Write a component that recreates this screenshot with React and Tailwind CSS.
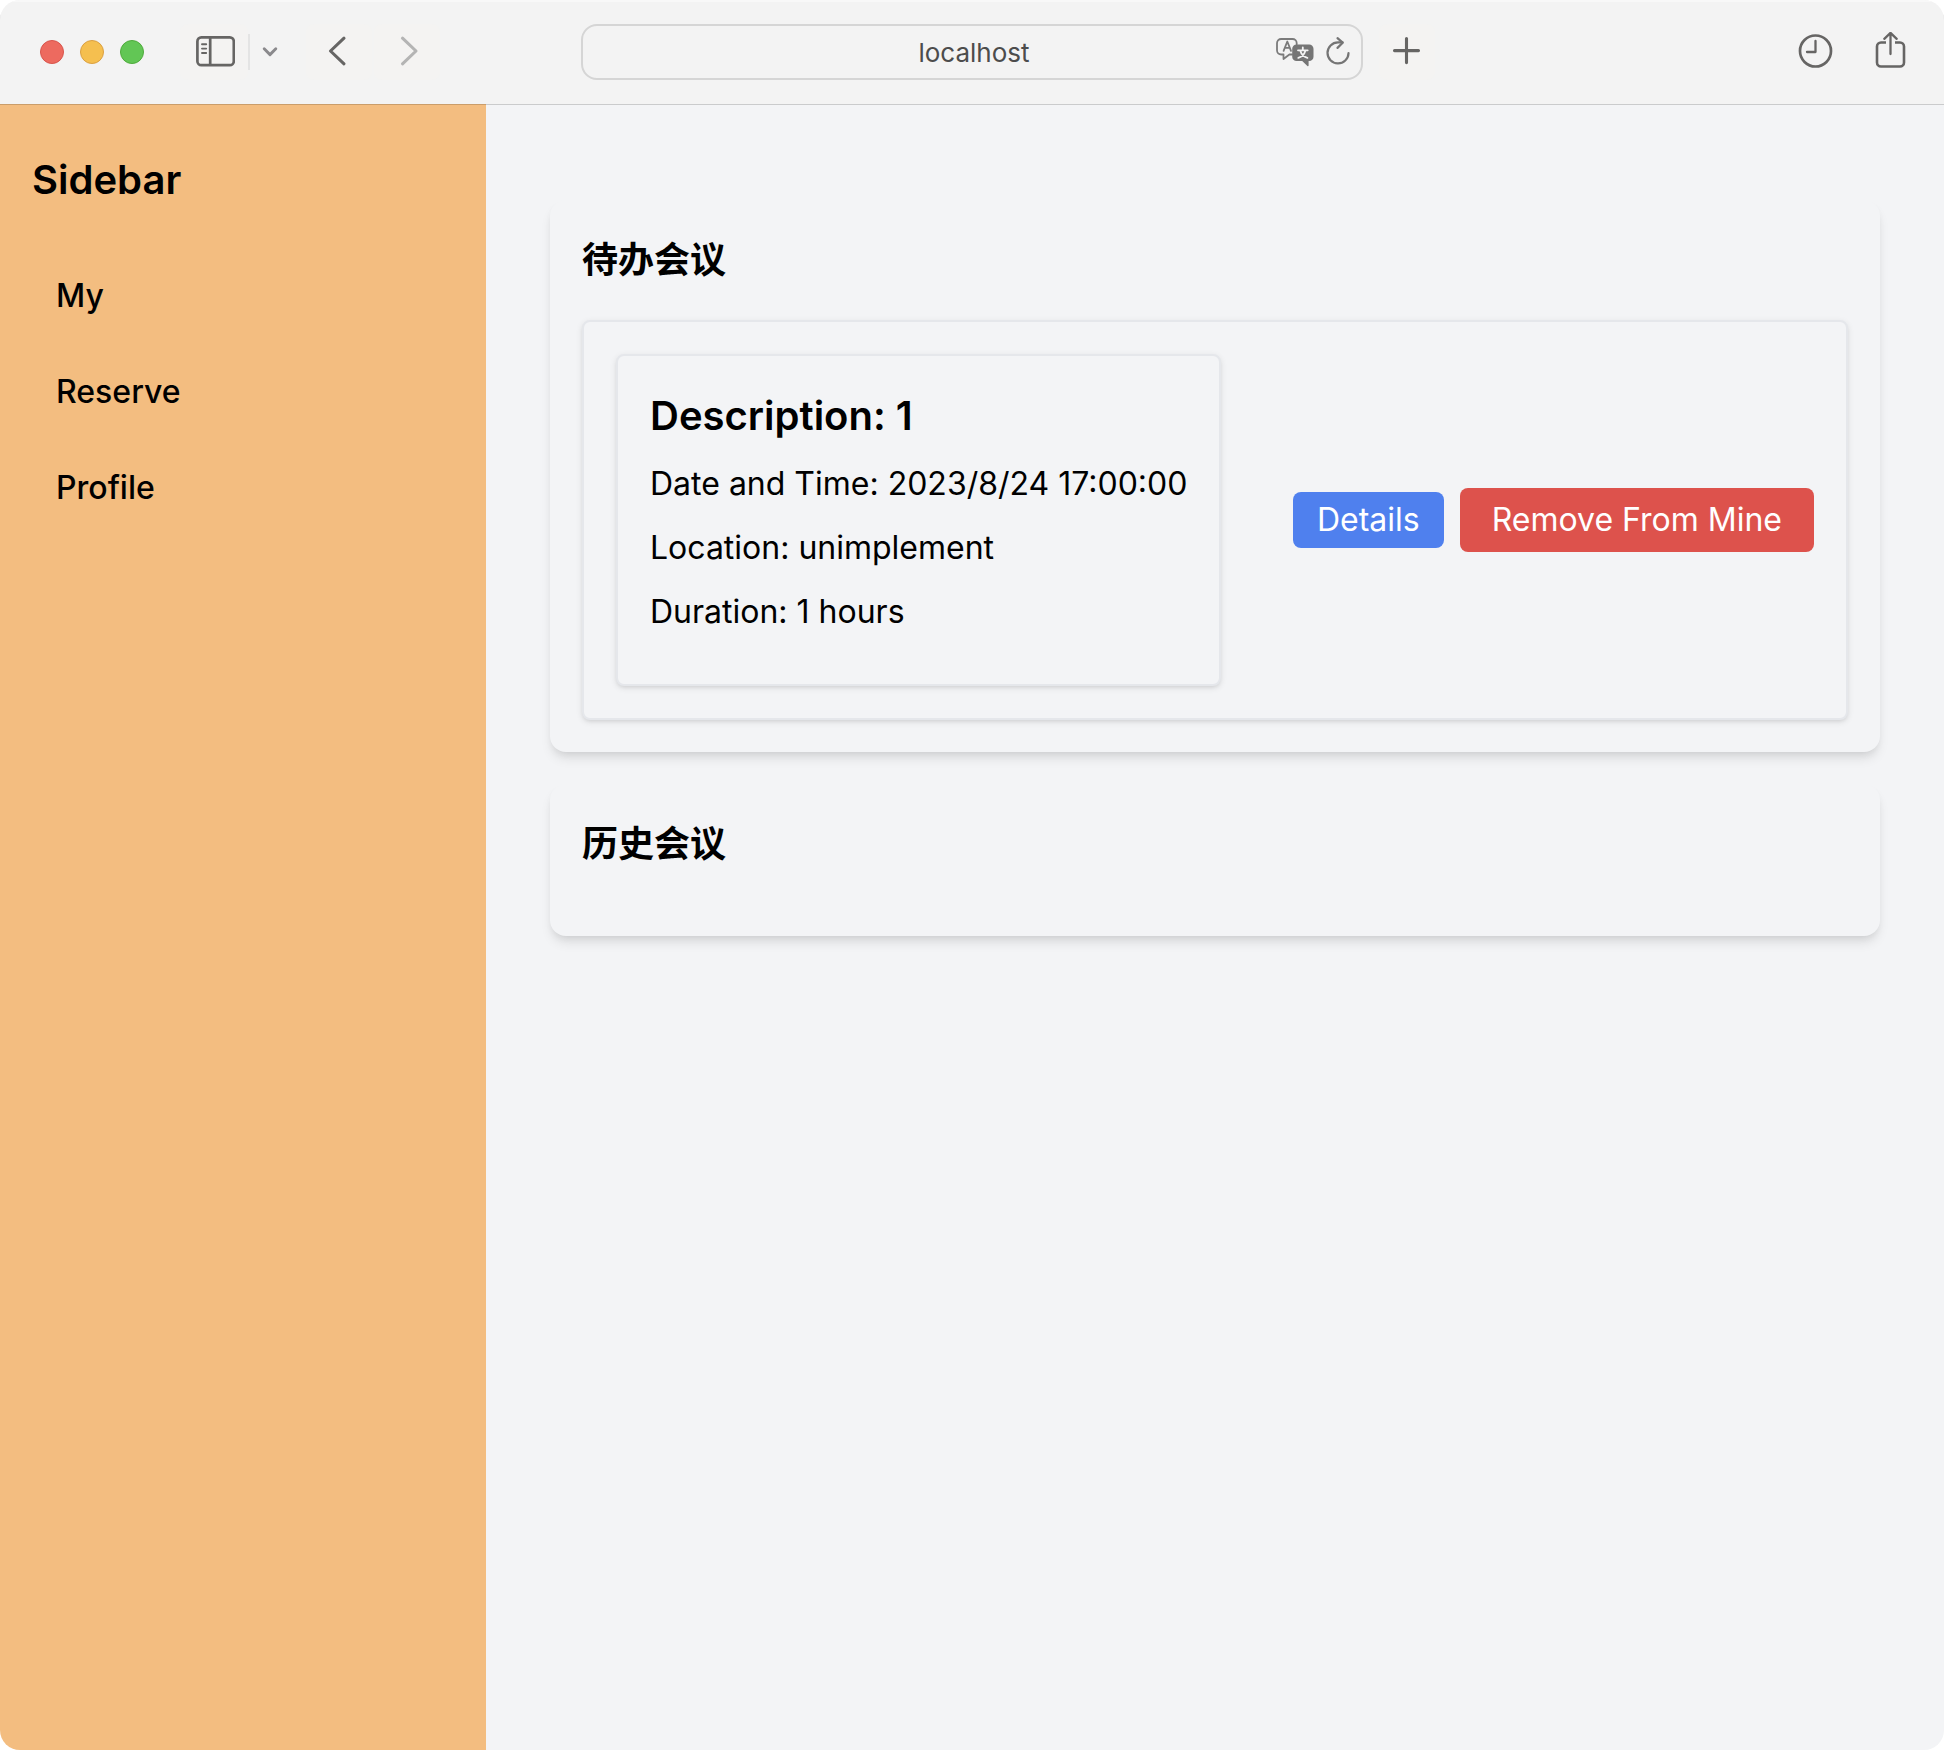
const meetings = [
  {
    id: 1,
    description: '1',
    time: '2023/8/24 17:00:00',
    location: 'unimplement',
    duration: '1 hours',
  },
];

const links = ['My', 'Reserve', 'Profile'];

function SidebarIcon() {
  return (
    <svg width="42" height="32" viewBox="0 0 42 32" fill="none" stroke="#666564" strokeWidth="2.7" strokeLinecap="round">
      <rect x="4.400" y="1.400" width="36.400" height="27.800" rx="4" />
      <path d="M17.200 2v27" strokeLinecap="butt" />
      <path d="M9 8.200h4.200M9 12.600h4.200M9 17h4.200" strokeWidth="1.900" />
    </svg>
  );
}

function TranslateIcon() {
  return (
    <svg width="40" height="32" viewBox="0 0 40 32" fill="none" strokeLinecap="round" strokeLinejoin="round">
      <path
        d="M17 18.500h-2.600L8.500 23v-4.500H6.200a4.200 4.200 0 0 1-4.200-4.200V7.200a4.200 4.200 0 0 1 4.200-4.200h11.300a4.200 4.200 0 0 1 4.200 4.200v1"
        stroke="#7b7b7b"
        strokeWidth="1.800"
      />
      <path d="M8.600 14.800 12.300 5.500l3.700 9.300M9.900 11.800h4.800" stroke="#7b7b7b" strokeWidth="1.800" />
      <path
        d="M21.500 8.500h12.700a4.300 4.300 0 0 1 4.300 4.300v8a4.300 4.300 0 0 1-4.300 4.300h-.6v4.300c0 .8-.7 1-1.200.5l-5.200-4.800h-5.700a4.300 4.300 0 0 1-4.300-4.300v-8a4.300 4.300 0 0 1 4.300-4.300z"
        fill="#757575"
      />
      <path d="M27.800 11.300v2M23 14.300h9.700M30.500 14.500c-1 3.400-3.500 6.200-7.200 7.400M25.200 14.500c1 3.400 3.500 6.200 7.200 7.400" stroke="#f3f3f3" strokeWidth="1.800" />
    </svg>
  );
}

function ReloadIcon() {
  return (
    <svg width="26" height="32" viewBox="0 0 26 32" fill="none" stroke="#757575" strokeWidth="2.200" strokeLinecap="round" strokeLinejoin="round">
      <path d="M23.500 17.200a10.500 10.500 0 1 1-10.500-10.800h4.500" />
      <path d="M12.500 2.200l5.200 4.500-5.200 5.200" />
    </svg>
  );
}

function Toolbar() {
  return (
    <header className="relative z-10 grid h-26 grid-cols-[1fr_minmax(0,782px)_1fr] items-center bg-[#f3f3f3] shadow-[0_1px_0_rgba(0,0,0,0.17),inset_0_2px_0_#f8f8f8]">
      <div className="flex items-center pl-10">
        <div className="flex gap-4">
          <button aria-label="Close" className="size-6 rounded-full border border-[#d8554c] bg-[#ed6a5f]" />
          <button aria-label="Minimize" className="size-6 rounded-full border border-[#dba042] bg-[#f5bf4f]" />
          <button aria-label="Zoom" className="size-6 rounded-full border border-[#4fab3c] bg-[#62c655]" />
        </div>
        <button aria-label="Show sidebar" className="ml-9 flex h-14 w-[68px] items-center justify-center rounded-lg bg-[#f4f3f2]">
          <SidebarIcon />
        </button>
        <div className="h-9 w-0.5 bg-[#e4e4e4]" />
        <button aria-label="Tab groups" className="flex h-14 w-10 items-center justify-center">
          <svg width="18" height="12" viewBox="0 0 18 12" fill="none" stroke="#8a898c" strokeWidth="2.900" strokeLinecap="round" strokeLinejoin="round">
            <path d="M3.200 2.800l5.800 5.800 5.800-5.800" />
          </svg>
        </button>
        <button aria-label="Back" className="ml-4 flex h-14 w-[66px] items-center rounded-lg bg-[#f4f3f2] pl-5">
          <svg width="22" height="32" viewBox="0 0 22 32" fill="none" stroke="#666564" strokeWidth="3.100" strokeLinecap="round" strokeLinejoin="round">
            <path d="M18 2.200L4.500 15 18 27.800" />
          </svg>
        </button>
        <button aria-label="Forward" className="ml-0.5 flex h-14 w-[66px] items-center rounded-lg bg-[#f4f3f2] pl-6">
          <svg width="22" height="32" viewBox="0 0 22 32" fill="none" stroke="#b4b4b4" strokeWidth="3.100" strokeLinecap="round" strokeLinejoin="round">
            <path d="M4.500 2.200L18 15 4.500 27.800" />
          </svg>
        </button>
      </div>
      <div className="flex h-14 items-center rounded-2xl border-2 border-[#d5d5d5] pr-2.5 pl-[90px]">
        <input
          aria-label="Address"
          defaultValue="localhost"
          className="h-full min-w-0 flex-1 bg-transparent text-center text-[26px] leading-8 text-[#4c4c4c] outline-none"
        />
        <button aria-label="Translate" className="flex">
          <TranslateIcon />
        </button>
        <button aria-label="Reload" className="ml-2.5 flex">
          <ReloadIcon />
        </button>
      </div>
      <div className="flex items-center justify-between pr-9 pl-4">
        <button aria-label="New tab" className="flex size-14 items-center justify-center rounded-lg bg-[#f4f3f2]">
          <svg width="30" height="30" viewBox="0 0 30 30" fill="none" stroke="#666564" strokeWidth="3.100" strokeLinecap="round">
            <path d="M14.500 1.600v24M2.500 13.600h24" />
          </svg>
        </button>
        <div className="flex items-center gap-10">
          <button aria-label="History" className="flex">
            <svg width="36" height="40" viewBox="0 0 36 40" fill="none" stroke="#666564" strokeWidth="2.700" strokeLinecap="round" strokeLinejoin="round">
              <circle cx="17.500" cy="19" r="15.500" />
              <path d="M17.500 9v11H9" strokeWidth="2.300" />
            </svg>
          </button>
          <button aria-label="Share" className="flex">
            <svg width="34" height="40" viewBox="0 0 34 40" fill="none" stroke="#666564" strokeWidth="2.600" strokeLinecap="round" strokeLinejoin="round">
              <path d="M12 10.500H7a4 4 0 0 0-4 4V30.500a4 4 0 0 0 4 4h19a4 4 0 0 0 4-4V14.500a4 4 0 0 0-4-4H21" strokeLinecap="butt" />
              <path d="M16.500 22V1M10.300 6.800L16.500 .9l6.200 5.900" strokeWidth="2.300" />
            </svg>
          </button>
        </div>
      </div>
    </header>
  );
}

function Section({ title, children }) {
  return (
    <section className="rounded-2xl bg-[#f3f4f6] p-8 shadow-[0_8px_12px_-2px_rgba(0,0,0,0.1),0_4px_8px_-4px_rgba(0,0,0,0.1)]">
      <h2 className="mb-8 text-4xl leading-14 font-semibold">{title}</h2>
      {children}
    </section>
  );
}

const boxClass =
  'rounded-lg border-2 border-[#e5e7eb] bg-[#f3f4f6] p-8 shadow-[0_2px_6px_0_rgba(0,0,0,0.1),0_2px_4px_-2px_rgba(0,0,0,0.1)]';

function Meeting({ meeting }) {
  return (
    <div className={`flex items-center justify-between ${boxClass}`}>
      <div className={boxClass}>
        <h3 className="mb-4 text-[40px] leading-14 font-semibold">Description: {meeting.description}</h3>
        <p className="mb-4">Date and Time: {meeting.time}</p>
        <p className="mb-4">Location: {meeting.location}</p>
        <p className="mb-4">Duration: {meeting.duration}</p>
      </div>
      <div className="flex items-center gap-4 text-white">
        <button className="rounded-lg bg-[#4f80ee] px-6 py-1">Details</button>
        <button className="rounded-lg bg-[#dd524c] px-8 py-2">Remove From Mine</button>
      </div>
    </div>
  );
}

export default function App() {
  return (
    <div className="bg-white font-['Inter','Noto_Sans_CJK_SC',sans-serif] text-[32px] leading-12 text-black">
      <div className="flex min-h-screen flex-col overflow-hidden rounded-[20px]">
        <Toolbar />
        <div className="flex flex-1">
          <aside className="w-1/4 bg-[#f3bd80] px-8 pt-12">
            <h1 className="text-[40px] leading-14 font-semibold">Sidebar</h1>
            <nav className="mt-10 flex flex-col font-medium">
              {links.map((link) => (
                <a key={link} href="#" className="p-6">
                  {link}
                </a>
              ))}
            </nav>
          </aside>
          <main className="flex flex-1 flex-col gap-8 bg-[#f3f4f6] px-16 pt-24">
            <Section title="待办会议">
              {meetings.map((meeting) => (
                <Meeting key={meeting.id} meeting={meeting} />
              ))}
            </Section>
            <Section title="历史会议" />
          </main>
        </div>
      </div>
    </div>
  );
}
